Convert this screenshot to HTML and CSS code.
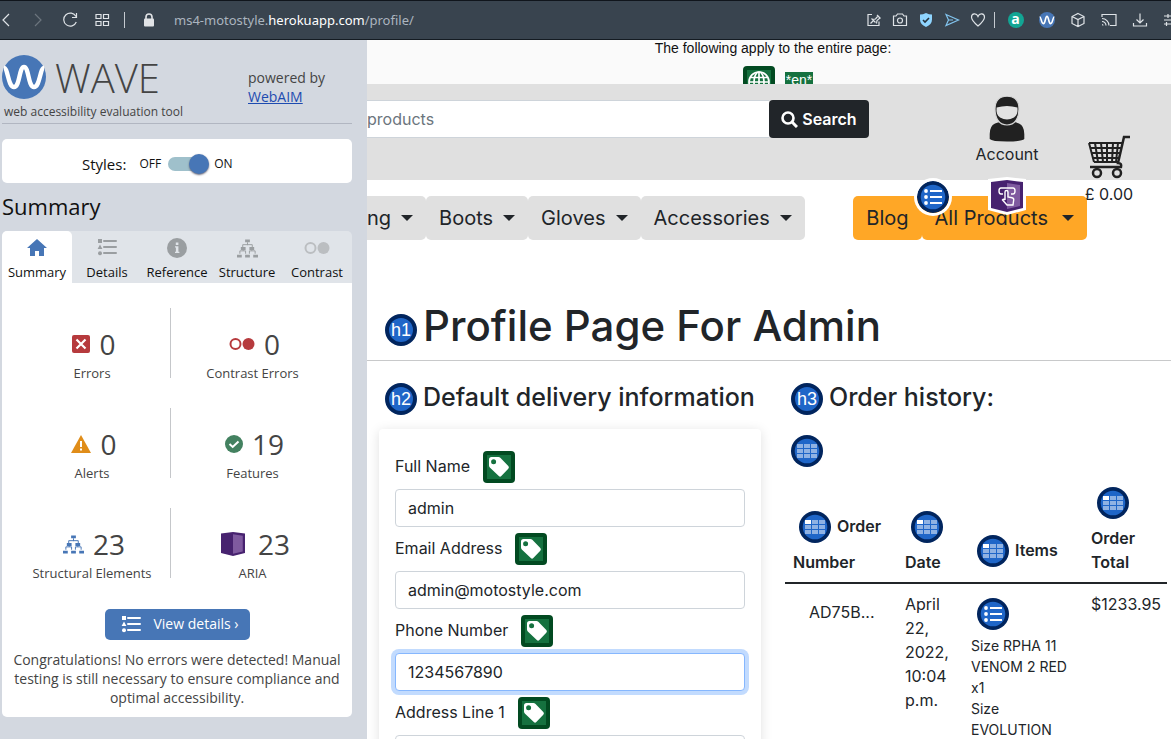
FILE: index.html
```html
<!DOCTYPE html>
<html lang="en">
<head>
<meta charset="utf-8">
<meta name="viewport" content="width=device-width, initial-scale=1">
<title>Profile</title>
<link rel="stylesheet" href="styles.css">
</head>
<body>
<svg class="sprite" aria-hidden="true">
  <symbol id="wave" viewBox="0 0 44 44"><circle cx="22" cy="22" r="22" fill="#4776b6"/><path d="M2 13C6 13 6 32 12 32S17 12 22 12s4 20 10 20 6-19 10-19" fill="none" stroke="#fff" stroke-width="4.4"/></symbol>
  <symbol id="list" viewBox="0 0 20 18"><path d="M7 3h12M7 9h12M7 15h12" stroke="currentColor" stroke-width="2" stroke-linecap="round"/><path d="M1 1h4v4H1zM3 6.600l2.400 4.400H.6z" fill="currentColor"/><circle cx="3" cy="15.300" r="2" fill="currentColor"/></symbol>
  <symbol id="tree" viewBox="0 0 22 20"><path d="M11 4v3M6 11V6.500h10V11M3 16v-3h6v3M13 16v-3h6v3M6.500 10v3M15.500 10v3" fill="none" stroke="currentColor"/><path d="M8.500 1h5v3h-5zM4 9h5v3H4zM13 9h5v3h-5zM0 17h5v3H0zM8.500 17h5v3h-5zM17 17h5v3h-5z" fill="currentColor"/></symbol>
  <symbol id="rings" viewBox="0 0 26 14"><circle cx="6.500" cy="7" r="5" fill="none" stroke="currentColor" stroke-width="2"/><circle cx="19.500" cy="7" r="6" fill="currentColor"/></symbol>
  <symbol id="tag" viewBox="0 0 32 32"><rect width="32" height="32" rx="4" fill="#024a21"/><path d="M4 4h24v24H4z" fill="#15713f"/><path fill-rule="evenodd" d="M6 8.500Q6 6 8.500 6h7q1 0 1.800.8L25.300 15q1.300 1.400 0 2.700l-7 7.400q-1.200 1.200-2.500 0L6.800 16.500Q6 15.700 6 14.500zM10.600 8.200a2.500 2.500 0 1 0 0 5 2.500 2.500 0 0 0 0-5" fill="#fff"/></symbol>
  <symbol id="globe" viewBox="0 0 32 32"><rect width="32" height="32" rx="4" fill="#024a21"/><path d="M4 4h24v24H4z" fill="#15713f"/><g fill="none" stroke="#fff" stroke-width="1.700"><circle cx="16" cy="16" r="10"/><ellipse cx="16" cy="16" rx="5" ry="10"/><path d="M6 16h20M7.500 11.500h17M7.500 20.500h17M16 6v20"/></g></symbol>
  <symbol id="disc" viewBox="0 0 32 32"><circle cx="16" cy="16" r="16" fill="#01255e"/><circle cx="16" cy="16" r="12.300" fill="#1f66c8"/></symbol>
  <symbol id="list-disc" viewBox="0 0 32 32"><use href="#disc"/><g fill="#fff"><circle cx="9" cy="10" r="1.900"/><circle cx="9" cy="16" r="1.900"/><circle cx="9" cy="22" r="1.900"/><path d="M13 9h12v2H13zM13 15h12v2H13zM13 21h12v2H13z"/></g></symbol>
  <symbol id="table-disc" viewBox="0 0 32 32"><use href="#disc"/><path d="M6 9h6v4H6zM13 9h6v4h-6zM20 9h6v4h-6zM6 14h6v4H6zM13 14h6v4h-6zM20 14h6v4h-6zM6 19h6v4H6zM13 19h6v4h-6zM20 19h6v4h-6z" fill="#8fb2e3"/></symbol>
  <symbol id="head-disc" viewBox="0 0 32 32"><use href="#table-disc"/><path d="M6 9h6v4H6z" fill="#fff"/></symbol>
  <symbol id="aria" viewBox="0 0 32 32"><path d="M0 2 16 0l16 2v26l-16 4-16-4z" fill="#47226f"/><path d="M16 3l13 2v21l-13 3z" fill="#7f5a9f"/></symbol>
</svg>

<header class="browser">
  <button class="nav-btn" aria-label="Back"><svg width="16" height="16" viewBox="0 0 16 16"><path d="M11 2 5 8l6 6"/></svg></button>
  <button class="nav-btn dim" aria-label="Forward"><svg width="16" height="16" viewBox="0 0 16 16"><path d="m5 2 6 6-6 6"/></svg></button>
  <button class="nav-btn" aria-label="Reload"><svg width="16" height="16" viewBox="0 0 16 16"><path d="M14 4.500A6.500 6.500 0 1 0 14.300 10M14.500 1v4.500H10"/></svg></button>
  <button class="nav-btn" aria-label="Speed dial"><svg width="16" height="16" viewBox="0 0 16 16"><path d="M2 2.500h5v4H2zM9.500 2.500h5v4h-5zM2 9.500h5v4H2zM9.500 9.500h5v4h-5z"/></svg></button>
  <span class="rule"></span>
  <svg class="lock" width="12" height="14" viewBox="0 0 12 14"><path d="M3 6V4a3 3 0 0 1 6 0v2" fill="none" stroke="#e1e3e6" stroke-width="1.600"/><rect x="1" y="5.500" width="10" height="8" rx="1" fill="#e1e3e6"/></svg>
  <span class="url">ms4-motostyle.<b>herokuapp.com</b>/profile/</span>
  <div class="tools">
    <button aria-label="Pin"><svg width="16" height="16" viewBox="0 0 16 16"><path d="M6 2.500H2v11h11V9.500M4.500 11.500l3-3M5.500 6.500l4 4M6.500 7.500l3-.5 2.500-3 2 2-3 2.500-.5 3M11 3l3.500 3.500"/></svg></button>
    <button aria-label="Snapshot"><svg width="16" height="16" viewBox="0 0 16 16"><path d="M1.500 4H4l1.500-2h5L12 4h2.500v9.500h-13z"/><circle cx="8" cy="8.500" r="2.500"/></svg></button>
    <button aria-label="Shield"><svg width="16" height="16" viewBox="0 0 16 16"><path d="M8 1q3 1.500 6 1.500v5Q14 12.500 8 15 2 12.500 2 7.500v-5Q5 2.500 8 1" fill="#8fd5ff" stroke="none"/><path d="m5 8 2 2 4-4" stroke="#26323e" stroke-width="1.600"/></svg></button>
    <button class="blue" aria-label="Send"><svg width="16" height="16" viewBox="0 0 16 16"><path d="m2 2.500 12.500 5.500L2 13.500 4.500 8zM4.500 8H9"/></svg></button>
    <button aria-label="Favourite"><svg width="16" height="16" viewBox="0 0 16 16"><path d="M8 14C4 10.500 1.500 8 1.500 5.200c0-4 5-4.400 6.500-.8 1.500-3.600 6.500-3.200 6.500.8C14.500 8 12 10.500 8 14z"/></svg></button>
  </div>
  <span class="rule"></span>
  <div class="extensions">
    <button aria-label="Avast"><span class="avast">a</span></button>
    <button aria-label="WAVE"><svg width="16" height="16"><use href="#wave"/></svg></button>
    <button aria-label="Extensions"><svg width="16" height="16" viewBox="0 0 16 16"><path d="m8 1.500 6 3v7l-6 3-6-3v-7zM2 4.500l6 3 6-3M8 7.500v7"/></svg></button>
    <button aria-label="Cast"><svg width="16" height="16" viewBox="0 0 16 16"><path d="M1 5V2.500h14v11H9M1 6.500a7 7 0 0 1 7 7M1 9.500a4 4 0 0 1 4 4M1 12.500a1 1 0 0 1 1 1"/></svg></button>
    <button aria-label="Downloads"><svg width="16" height="16" viewBox="0 0 16 16"><path d="M8 1.500v9M4.500 7.500 8 11l3.500-3.500M1.500 11v3h13v-3"/></svg></button>
    <button aria-label="Settings"><svg width="16" height="16" viewBox="0 0 16 16"><path d="M1 4h14M1 8h14M1 12h14M5 2v4M3.500 10v4"/></svg></button>
  </div>
</header>

<div class="workspace">
  <aside class="wave">
    <div class="brand">
      <svg class="brand-mark" width="44" height="44"><use href="#wave"/></svg>
      <span class="brand-name">WAVE</span>
      <p class="powered">powered by<br><a href="#">WebAIM</a></p>
      <p class="tagline">web accessibility evaluation tool</p>
    </div>
    <div class="styles">
      <label for="styles-switch">Styles:</label>
      <span class="state">OFF</span>
      <input type="checkbox" id="styles-switch" class="switch" checked>
      <span class="state">ON</span>
    </div>
    <h2 class="summary-title">Summary</h2>
    <div class="tabs">
      <button class="tab active"><svg width="20" height="20" viewBox="0 0 20 20"><path d="M10 1 0 10h3v8h5v-5h4v5h5v-8h3z" fill="#4776b6"/></svg>Summary</button>
      <button class="tab"><svg width="20" height="18"><use href="#list"/></svg>Details</button>
      <button class="tab"><svg width="20" height="20" viewBox="0 0 20 20"><circle cx="10" cy="10" r="10" fill="#9a9ea1"/><path d="M8.800 4.500h2.600V7H8.800zM8 8.300h3.400v5.400h1V15H8v-1.300h.9V9.600H8z" fill="#e0e4e9"/></svg>Reference</button>
      <button class="tab"><svg width="21" height="20"><use href="#tree"/></svg>Structure</button>
      <button class="tab light"><svg width="26" height="20"><use href="#rings"/></svg>Contrast</button>
    </div>
    <div class="panel">
      <div class="stats">
        <div class="stat"><div class="count"><svg width="18" height="18" viewBox="0 0 18 18"><rect width="18" height="18" rx="2" fill="#b63a3d"/><path d="m4.500 4.500 9 9m0-9-9 9" stroke="#fff" stroke-width="2.200"/></svg>0</div>Errors</div>
        <div class="stat"><div class="count red"><svg width="26" height="14"><use href="#rings"/></svg>0</div>Contrast Errors</div>
        <div class="stat"><div class="count"><svg width="20" height="18" viewBox="0 0 20 18"><path d="M10 0 20 18H0z" fill="#e08d19"/><path d="M9 6h2v6H9zM9 13.500h2v2H9z" fill="#fff"/></svg>0</div>Alerts</div>
        <div class="stat"><div class="count"><svg width="18" height="18" viewBox="0 0 18 18"><circle cx="9" cy="9" r="9" fill="#438160"/><path d="m4.500 9 3.200 3 5.800-5.500" fill="none" stroke="#fff" stroke-width="2"/></svg>19</div>Features</div>
        <div class="stat"><div class="count blue-icon"><svg width="21" height="20"><use href="#tree"/></svg>23</div>Structural Elements</div>
        <div class="stat"><div class="count wide"><svg width="24" height="24"><use href="#aria"/></svg>23</div>ARIA</div>
      </div>
      <button class="view-details"><svg width="20" height="18"><use href="#list"/></svg>View details ›</button>
      <p class="message">Congratulations! No errors were detected! Manual testing is still necessary to ensure compliance and optimal accessibility.</p>
    </div>
  </aside>

  <main class="page">
    <div class="page-notice">The following apply to the entire page:
      <div class="notice-icons"><svg width="32" height="32"><use href="#globe"/></svg><span class="lang">*en*</span></div>
    </div>
    <header class="site-header">
      <form class="search">
        <input type="search" placeholder="products" aria-label="Search products">
        <button type="button"><svg width="17" height="17" viewBox="0 0 17 17"><circle cx="7" cy="7" r="5.500" fill="none" stroke="#fff" stroke-width="2.600"/><path d="m11 11 5 5" stroke="#fff" stroke-width="3"/></svg>Search</button>
      </form>
      <a class="account" href="#"><svg width="36" height="46" viewBox="0 0 36 46"><path d="M.7 43v-5q0-8 5.300-10.500 3-1.500 6-1.500h12q3 0 6 1.500 5.300 2.500 5.300 10.500v5q-2 2.500-17.300 2.500T.7 43" fill="#212121"/><path d="M18 .2C10 .2 6 5 6 13c0 9 4 16 12 16s12-7 12-16C30 5 26 .2 18 .2" fill="#212121" stroke="#d5d5d5" stroke-width="1.200"/><path d="M7.600 11.500q10.400-3 20.800 0c.6 5-.6 8-3.400 10q-7 4-14 0c-2.800-2-4-5-3.400-10" fill="#e2e2e2"/></svg>Account</a>
      <a class="cart" href="#"><svg width="42" height="44" viewBox="0 0 42 44" fill="none" stroke="#212121"><path d="M42 2h-6l-6 26q4 0 3 4H2" stroke-width="2.500"/><path d="M1 8h33M2 13h31M4 18h28M5 23h26M6 27h24M1 8l5 19M7 8l3 19M13 8l2 19M19 8v19M25 8l-1 19M30 8l-2 19" stroke-width="2"/><circle cx="9" cy="38" r="4" stroke-width="2.500"/><circle cx="29" cy="38" r="4" stroke-width="2.500"/></svg>£ 0.00</a>
    </header>
    <nav class="site-nav">
      <a class="first" href="#">ng<i class="caret"></i></a>
      <a href="#">Boots<i class="caret"></i></a>
      <a href="#">Gloves<i class="caret"></i></a>
      <a href="#">Accessories<i class="caret"></i></a>
      <a class="accent push" href="#">Blog</a>
      <a class="accent" href="#">All Products<i class="caret"></i>
        <svg class="pin list-pin" width="32" height="32"><use href="#list-disc"/></svg>
        <svg class="pin aria-pin" width="38" height="38" viewBox="-3 -3 38 38"><path d="M-3-1 16-3l19 2v31l-19 5-19-5z" fill="#fff"/><use href="#aria" width="32" height="32"/><path d="M12 14H10q-2 0-2-3t2-3h12q2 0 2 3t-2 3h-2M14 20v-8q0-1.500 1.500-1.500T17 12v5l4 .8q2 .4 1.700 2.200L22 25h-6l-4.500-5q1-1.500 2.500 0" fill="none" stroke="#fff" stroke-width="1.400"/></svg>
      </a>
    </nav>
    <h1 class="title"><span class="level">h1</span>Profile Page For Admin</h1>
    <div class="columns">
      <section>
        <h2 class="subtitle"><span class="level">h2</span>Default delivery information</h2>
        <form class="card">
          <div class="field"><label for="name">Full Name</label><svg width="32" height="32"><use href="#tag"/></svg><input id="name" type="text" value="admin"></div>
          <div class="field"><label for="email">Email Address</label><svg width="32" height="32"><use href="#tag"/></svg><input id="email" type="email" value="admin@motostyle.com"></div>
          <div class="field"><label for="phone">Phone Number</label><svg width="32" height="32"><use href="#tag"/></svg><input id="phone" class="focused" type="tel" value="1234567890"></div>
          <div class="field"><label for="address">Address Line 1</label><svg width="32" height="32"><use href="#tag"/></svg><input id="address" type="text"></div>
        </form>
      </section>
      <section>
        <h3 class="subtitle"><span class="level">h3</span>Order history:</h3>
        <svg class="table-mark" width="32" height="32"><use href="#table-disc"/></svg>
        <table class="orders">
          <colgroup><col class="c-number"><col class="c-date"><col class="c-items"><col class="c-total"></colgroup>
          <thead><tr>
            <th><svg width="32" height="32"><use href="#head-disc"/></svg>Order Number</th>
            <th><svg width="32" height="32"><use href="#head-disc"/></svg>Date</th>
            <th><svg width="32" height="32"><use href="#head-disc"/></svg>Items</th>
            <th><svg width="32" height="32"><use href="#head-disc"/></svg>Order Total</th>
          </tr></thead>
          <tbody><tr>
            <td><a class="order-link" href="#">AD75B...</a></td>
            <td>April 22, 2022, 10:04 p.m.</td>
            <td class="items"><svg width="32" height="32"><use href="#list-disc"/></svg><ul><li>Size RPHA 11 VENOM 2 RED x1</li><li>Size EVOLUTION</li></ul></td>
            <td>$1233.95</td>
          </tr></tbody>
        </table>
      </section>
    </div>
  </main>
</div>
</body>
</html>
```
FILE: styles.css
```css
* { box-sizing: border-box; }
body { margin: 0; height: 100vh; overflow: hidden; display: flex; flex-direction: column; }
h1, h2, h3, p, ul { margin: 0; padding: 0; font-weight: 400; }
button { font: inherit; border: 0; padding: 0; background: none; color: inherit; }
svg { flex: none; }
.sprite { position: absolute; width: 0; height: 0; }

/* browser bar */
.browser { flex: none; height: 40px; display: flex; align-items: center; overflow: hidden; background: #39444f; border-top: 1px solid #10151c; border-bottom: 1px solid #141b22; color: #dfe3e7; }
.browser button { display: flex; justify-content: center; align-items: center; }
.browser button svg { fill: none; stroke: currentColor; stroke-width: 1.2; }
.nav-btn { flex: none; width: 32px; }
.nav-btn:first-child { margin-left: -10px; }
.nav-btn.dim { color: #6c757e; }
.nav-btn + .rule { margin: 0 18px 0 6px; }
.rule { flex: none; width: 1px; height: 16px; background: #c5cad0; }
.url { margin-left: 19px; font: 13px/20px "Noto Sans", sans-serif; color: #abb5bf; white-space: nowrap; }
.url b { font-weight: 400; color: #fff; }
.tools { display: flex; margin-left: auto; margin-right: 3px; }
.tools button { width: 26px; }
.tools .blue { color: #82c4ee; }
.extensions { display: flex; flex: none; margin: 0 -15px 0 5px; }
.extensions button { width: 31px; }
.extensions button:nth-child(2) svg { stroke: none; }
.avast { width: 16px; height: 16px; border-radius: 50%; background: #12a594; color: #fff; font: bold 14px/14px "Open Sans", sans-serif; }

.workspace { flex: 1; min-height: 0; display: flex; }

/* evaluation sidebar */
.wave { flex: 0 0 367px; padding: 0 15px 0 2px; background: #d3d8e0; color: #444; font: 13px/18px "Open Sans", sans-serif; }
.brand { display: grid; grid-template-columns: 44px 1fr 104px; column-gap: 9px; height: 84px; padding-top: 15px; border-bottom: 1px solid #b1b6c1; }
.brand-name { font-size: 40px; line-height: 46px; font-weight: 300; }
.powered { font-size: 14px; line-height: 19px; padding-top: 13px; grid-row: span 2; }
.powered a { color: #1d4bb0; }
.tagline { grid-column: 1 / 3; grid-row: 2; font-size: 12px; line-height: 16px; padding-left: 2px; }
.styles { height: 44px; margin-top: 15px; padding: 5px 0 0 80px; display: flex; align-items: center; background: #fff; border-radius: 5px; color: #111; }
.styles label { font-size: 15px; line-height: 20px; margin-right: 13px; }
.state { font-size: 12px; }
.switch { appearance: none; position: relative; width: 40px; height: 14px; margin: 0 6px 0 7px; border-radius: 7px; background: #9fc0cb; }
.switch::after { content: ""; position: absolute; right: -1px; top: -3px; width: 20px; height: 20px; border-radius: 50%; background: #4776b6; box-shadow: 0 1px 2px #667; }
.summary-title { font-size: 22px; line-height: 30px; margin: 8px 0 10px; color: #111; }
.tabs { display: grid; grid-template-columns: repeat(5, 1fr); height: 52px; background: #e0e4e9; border-radius: 5px 5px 0 0; color: #111; }
.tab { display: flex; flex-direction: column; align-items: center; justify-content: space-between; padding: 7px 0 2px; font-size: 13px; line-height: 18px; }
.tab svg { color: #9a9ea1; }
.tab.light svg { color: #bbbec1; }
.tab.active { background: #fff; border-radius: 5px 5px 0 0; }
.panel { height: 434px; background: #fff; border-radius: 0 0 5px 5px; text-align: center; padding-top: 25px; }
.stats { display: grid; grid-template-columns: 157px 1fr; row-gap: 30px; padding: 0 18px 0 12px; }
.stat { height: 70px; padding-top: 16px; }
.stat:nth-child(odd) { border-right: 1px solid #c5c7ca; }
.count { display: flex; justify-content: center; align-items: center; gap: 9px; height: 40px; padding-left: 4px; font-size: 28px; line-height: 38px; }
.red svg { color: #b63a3d; }
.blue-icon svg { color: #4776b6; }
.count.wide { gap: 13px; padding-left: 6px; }
.view-details { display: flex; align-items: center; justify-content: center; gap: 12px; width: 145px; height: 31px; margin: 31px auto 10px 103px; padding: 0 0 2px 5px; border-radius: 5px; background: #4776b6; color: #fff; font-size: 14px; }
.message { font-size: 14px; line-height: 19px; padding: 0 8px; }

/* evaluated page */
.page { flex: 1; min-width: 0; overflow: hidden; background: #fff; color: #212529; font: 16px/24px Inter, sans-serif; }
.page a { color: inherit; text-decoration: none; }
.page-notice { height: 44px; overflow: hidden; background: #fafafa; padding-left: 8px; text-align: center; font: 14px/17px "Liberation Sans", sans-serif; color: #111; }
.notice-icons { display: flex; justify-content: center; gap: 10px; padding-top: 9px; padding-left: 10px; }
.lang { height: 12px; margin-top: 6px; background: #15713f; color: #fff; line-height: 16px; padding: 0 1px; }
.site-header { height: 96px; display: grid; grid-template-columns: 502px 1fr 74px; padding-right: 25px; background: #e0e0e0; }
.search { display: flex; height: 38px; margin-top: 16px; }
.search input { flex: 1; min-width: 0; border: 1px solid #ced4da; border-width: 1px 0; border-radius: 0; padding: 0; font: inherit; background: #fff; }
.search input::placeholder { color: #6c757d; }
.search button { display: flex; align-items: center; justify-content: center; gap: 4px; width: 100px; background: #212529; color: #fff; border-radius: 4px; font-weight: 600; }
.account, .cart { display: flex; flex-direction: column; align-items: center; }
.account { padding: 12px 0 0 73px; }
.cart { padding-top: 51px; position: relative; line-height: 30px; }
.site-nav { display: flex; height: 60px; padding: 16px 84px 0 0; font-size: 20px; }
.site-nav a { position: relative; display: flex; align-items: center; padding: 0 13px; border-radius: 5px; background: #e0e0e0; }
.site-nav .first { padding-left: 0; border-radius: 0 5px 5px 0; }
.site-nav .accent { background: #ffa726; }
.site-nav .push { margin-left: auto; }
.caret { margin-left: 10px; border: 6px solid transparent; border-top-color: currentColor; border-bottom: 0; }
.accent .caret { margin-left: 14px; }
.pin { position: absolute; }
.list-pin { left: -5px; top: -15px; border-radius: 50%; box-shadow: 0 0 0 3px #fff; }
.aria-pin { left: 66px; top: -19px; }
.level { flex: none; width: 32px; height: 32px; border: 4px solid #01255e; border-radius: 50%; background: #1f66c8; color: #fff; text-align: center; font: 18px/25px "Liberation Sans", sans-serif; }
.title { display: flex; align-items: center; gap: 6px; height: 121px; padding: 52px 18px 0; border-bottom: 1px solid #c8c9ca; font-size: 42px; line-height: 48px; font-weight: 500; white-space: nowrap; }
.title .level { margin-top: 8px; }
.columns { display: grid; grid-template-columns: 1fr 1fr; gap: 24px; padding: 20px 4px 0 12px; }
.subtitle { display: flex; align-items: center; gap: 6px; height: 32px; padding-left: 6px; font-size: 25px; line-height: 30px; font-weight: 500; white-space: nowrap; }
.subtitle .level { margin-top: 4px; }
.card { margin-top: 16px; padding: 22px 16px 80px; border-radius: 4px; box-shadow: 0 2px 12px #00000020; }
.field { display: flex; flex-wrap: wrap; align-items: center; gap: 6px 13px; margin-bottom: 6px; }
.field label { padding-bottom: 3px; }
.field input { width: 100%; height: 38px; padding: 0 12px; border: 1px solid #ced4da; border-radius: 4px; font: inherit; color: inherit; background: #fff; }
.field .focused { border-color: #86b7fe; box-shadow: 0 0 0 4px #c2dbfe; outline: 0; }
.table-mark { display: block; margin: 22px 0 12px 6px; }
.orders { width: 100%; table-layout: fixed; border-collapse: collapse; }
.c-number { width: 112px; }
.c-date { width: 66px; }
.c-items { width: 120px; }
.orders th { padding: 8px; vertical-align: bottom; text-align: left; font-weight: 600; border-bottom: 2px solid #212529; }
.orders th svg { margin: 0 6px 7px; vertical-align: -18px; }
.orders td { padding: 8px; vertical-align: top; }
.order-link { display: block; padding: 8px 0 0 16px; }
.items svg { display: block; margin: 6px 6px 5px; }
.items ul { list-style: none; font-size: 14px; line-height: 21px; }
```
